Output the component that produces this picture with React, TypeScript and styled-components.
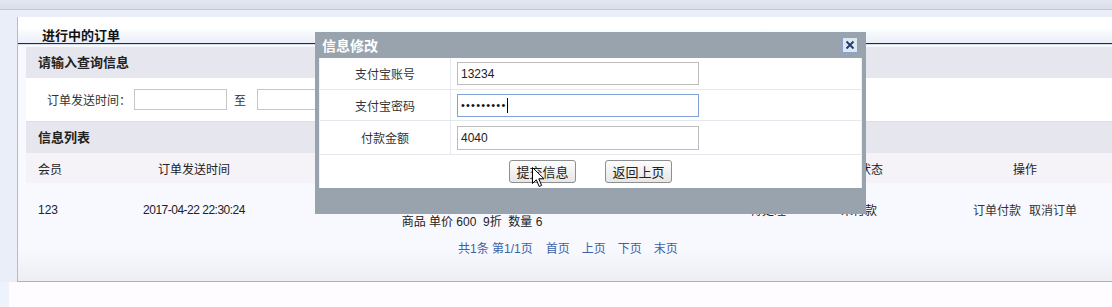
import React from 'react';
import styled, { createGlobalStyle } from 'styled-components';

const GlobalStyle = createGlobalStyle`
  html, body {
    margin: 0;
    padding: 0;
  }
  body {
    width: 1112px;
    height: 307px;
    overflow: hidden;
    background: #eef2fb;
    font-family: "Liberation Sans", "Noto Sans CJK SC", sans-serif;
    font-size: 12px;
    color: #222;
  }
`;

const cols = [90, 156, 400, 46, 100, 82, 250];

function App() {
  return (
    <Page>
      <GlobalStyle />
      <TopBand />
      <Frame>
        <Panel>
          <PanelHead>
            <PanelTitle>进行中的订单</PanelTitle>
          </PanelHead>
          <PanelBody>
            <SectionBar>请输入查询信息</SectionBar>
            <SearchRow>
              <SearchLabel>订单发送时间：</SearchLabel>
              <DateInput />
              <To>至</To>
              <DateInput />
            </SearchRow>
            <SectionBar>信息列表</SectionBar>
            <HeadRow>
              <Cell align="left">会员</Cell>
              <Cell>订单发送时间</Cell>
              <Cell>订单详情</Cell>
              <Cell>金额</Cell>
              <Cell>订单状态</Cell>
              <Cell>付款状态</Cell>
              <Cell>操作</Cell>
            </HeadRow>
            <DataRow>
              <Cell align="left">123</Cell>
              <Cell tight>2017-04-22 22:30:24</Cell>
              <ProductCell>
                <div>商品详情</div>
                <div>商品 单价 600 &nbsp;9折 &nbsp;数量 6</div>
              </ProductCell>
              <Cell>4040</Cell>
              <Cell>待处理</Cell>
              <Cell>未付款</Cell>
              <Cell>
                <Action>订单付款</Action>
                <Action>取消订单</Action>
              </Cell>
            </DataRow>
            <Pager>
              <PageInfo>共1条 第1/1页</PageInfo>
              <PageLink>首页</PageLink>
              <PageLink>上页</PageLink>
              <PageLink>下页</PageLink>
              <PageLink>末页</PageLink>
            </Pager>
          </PanelBody>
        </Panel>
      </Frame>
      <Footer />

      <Dialog>
        <DialogTitle>
          <span>信息修改</span>
          <CloseBtn>
            <svg width="10" height="10" viewBox="0 0 10 10">
              <path d="M1.5 1.5 L8.5 8.5 M8.5 1.5 L1.5 8.5" stroke="#243a63" strokeWidth="1.8" />
            </svg>
          </CloseBtn>
        </DialogTitle>
        <DialogBody>
          <FormRow height={31}>
            <FormLabel>支付宝账号</FormLabel>
            <FormField>
              <TextInput defaultValue="13234" />
            </FormField>
          </FormRow>
          <FormRow height={30}>
            <FormLabel>支付宝密码</FormLabel>
            <FormField>
              <FocusInput>
                <Dots>•••••••••</Dots>
                <Caret />
              </FocusInput>
            </FormField>
          </FormRow>
          <FormRow height={33}>
            <FormLabel>付款金额</FormLabel>
            <FormField>
              <TextInput defaultValue="4040" tall />
            </FormField>
          </FormRow>
          <ButtonRow>
            <Button>提交信息</Button>
            <Button>返回上页</Button>
          </ButtonRow>
        </DialogBody>
      </Dialog>

      <Cursor width="13" height="21" viewBox="0 0 13 21">
        <path
          d="M0.5 0.5 L0.5 16.5 L4.3 12.8 L7.2 19.5 L9.6 18.4 L6.8 11.8 L12 11.8 Z"
          fill="#fff"
          stroke="#000"
          strokeWidth="1"
          strokeLinejoin="round"
        />
      </Cursor>
    </Page>
  );
}

const Page = styled.div`
  position: relative;
  width: 1112px;
  height: 307px;
  overflow: hidden;
`;

const TopBand = styled.div`
  height: 9px;
  background: linear-gradient(#e3e7ef, #d9dde7);
  border-bottom: 1px solid #c4c8d2;
`;

const Frame = styled.div`
  padding: 7px 0 0 17px;
  background: #eaeef9;
`;

const Panel = styled.div`
  width: 1143px;
  border-left: 1px solid #b3bbcc;
  border-bottom: 1px solid #a9b1c5;
  background: linear-gradient(to bottom, #f7f9fe 88%, #eceef4);
`;

const PanelHead = styled.div`
  height: 26px;
  background: linear-gradient(#ffffff 40%, #e9eef8);
  border-bottom: 1px solid #1f2d3b;
  box-shadow: 0 1px 0 #d9dfe9;
  display: flex;
  align-items: flex-end;
`;

const PanelTitle = styled.div`
  padding: 0 0 0 24px;
  font-size: 13px;
  font-weight: bold;
  line-height: 14px;
  color: #111;
`;

const PanelBody = styled.div`
  padding: 3px 0 20px 8px;
`;

const SectionBar = styled.div`
  height: 31px;
  line-height: 31px;
  padding-left: 12px;
  background: #e6e6ef;
  font-size: 13px;
  font-weight: bold;
  color: #222;
`;

const SearchRow = styled.div`
  height: 43px;
  display: flex;
  align-items: center;
  padding-left: 21px;
  background: #ffffff;
  border-bottom: 1px solid #dcdfe8;
`;

const SearchLabel = styled.span`
  color: #333;
  margin-right: 3px;
`;

const DateInput = styled.input`
  width: 93px;
  height: 21px;
  box-sizing: border-box;
  border: 1px solid #c6c6c6;
  background: #fff;
`;

const To = styled.span`
  margin: 0 11px 0 7px;
  color: #333;
`;

const Row = styled.div`
  display: grid;
  grid-template-columns: ${cols.map((c) => c + 'px').join(' ')};
`;

const HeadRow = styled(Row)`
  height: 30px;
  background: #f6f3f8;
  color: #222;
`;

const DataRow = styled(Row)`
  height: 50px;
  padding-top: 3px;
  box-sizing: border-box;
  background: #f7f9fe;
  color: #222;
`;

const Cell = styled.div<{ align?: 'left' | 'center'; tight?: boolean }>`
  display: flex;
  align-items: center;
  justify-content: ${(p) => (p.align === 'left' ? 'flex-start' : 'center')};
  padding-left: ${(p) => (p.align === 'left' ? '12px' : '0')};
  letter-spacing: ${(p) => (p.tight ? '-0.5px' : 'normal')};
  white-space: nowrap;
`;

const ProductCell = styled.div`
  display: flex;
  flex-direction: column;
  align-items: center;
  justify-content: flex-end;
  line-height: 22px;
  white-space: nowrap;
`;

const Action = styled.span`
  color: #333;
  & + & {
    margin-left: 8px;
  }
`;

const Pager = styled.div`
  height: 28px;
  display: flex;
  align-items: center;
  gap: 12px;
  padding-left: 432px;
  color: #3a62a6;
`;

const PageInfo = styled.span`
  margin-right: 1px;
`;

const PageLink = styled.span`
  cursor: pointer;
`;

const Footer = styled.div`
  margin-left: 9px;
  height: 30px;
  background: #fffcff;
`;

const Dialog = styled.div`
  position: absolute;
  left: 315px;
  top: 32px;
  width: 551px;
  height: 182px;
  box-sizing: border-box;
  padding: 0 4px;
  background: #98a3ae;
`;

const DialogTitle = styled.div`
  height: 26px;
  display: flex;
  align-items: center;
  justify-content: space-between;
  padding: 0 4px 0 3px;
  color: #fff;
  font-size: 14px;
  font-weight: bold;
`;

const CloseBtn = styled.div`
  width: 16px;
  height: 16px;
  box-sizing: border-box;
  border: 1px solid #8ba3cb;
  background: #dfe7f5;
  display: flex;
  align-items: center;
  justify-content: center;
`;

const DialogBody = styled.div`
  background: #fff;
  border-left: 1px solid #eef1f5;
  border-right: 1px solid #eef1f5;
`;

const FormRow = styled.div<{ height: number }>`
  display: flex;
  height: ${(p) => p.height}px;
  border-bottom: 1px solid #e4e8ee;
`;

const FormLabel = styled.div`
  width: 130px;
  border-right: 1px solid #e6e9ef;
  display: flex;
  align-items: center;
  justify-content: center;
  color: #333;
`;

const FormField = styled.div`
  flex: 1;
  display: flex;
  align-items: center;
  padding-left: 6px;
`;

const TextInput = styled.input<{ tall?: boolean }>`
  width: 242px;
  height: ${(p) => (p.tall ? '24px' : '23px')};
  box-sizing: border-box;
  border: 1px solid #bdbdbd;
  padding: 0 3px;
  font-family: "Liberation Sans", sans-serif;
  font-size: 12px;
  color: #222;
  outline: none;
`;

const FocusInput = styled.div`
  width: 242px;
  height: 23px;
  box-sizing: border-box;
  border: 1px solid #7fa3d6;
  padding: 0 3px;
  display: flex;
  align-items: center;
  background: #fff;
`;

const Dots = styled.span`
  font-size: 11px;
  letter-spacing: 1.2px;
  color: #111;
`;

const Caret = styled.span`
  width: 1px;
  height: 15px;
  background: #000;
  margin-left: 1px;
`;

const ButtonRow = styled.div`
  height: 33px;
  display: flex;
  align-items: center;
  justify-content: center;
  gap: 29px;
`;

const Button = styled.button`
  width: 67px;
  height: 23px;
  padding: 0;
  border: 1px solid #8d8e8f;
  border-radius: 3px;
  background: linear-gradient(#fdfdfd, #e6e6e6);
  font-family: "Liberation Sans", "Noto Sans CJK SC", sans-serif;
  font-size: 13px;
  color: #222;
`;

const Cursor = styled.svg`
  position: absolute;
  left: 532px;
  top: 167px;
`;

export default App;
